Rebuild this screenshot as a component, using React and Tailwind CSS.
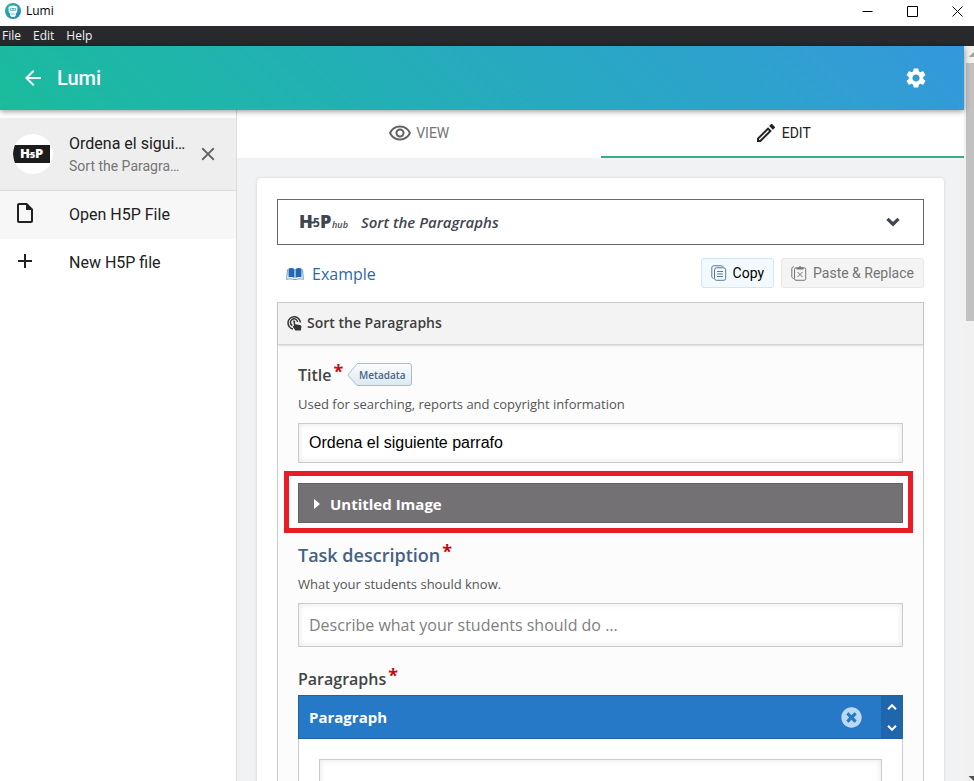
import React, { useState } from "react";
import { MdAdd, MdArrowBack, MdClose, MdOutlineEdit, MdOutlineInsertDriveFile, MdOutlineRemoveRedEye, MdSettings } from "react-icons/md";
import { FaTimesCircle } from "react-icons/fa";

const menuItems = ["File", "Edit", "Help"];

function LumiLogo() {
  return (
    <svg viewBox="0 0 16 16" className="h-4 w-4" aria-hidden="true">
      <defs>
        <linearGradient id="lumi" x1="0" y1="0" x2="1" y2="1">
          <stop offset="0" stopColor="#1abc9c" />
          <stop offset="1" stopColor="#2f7fc4" />
        </linearGradient>
      </defs>
      <circle cx="8" cy="8" r="8" fill="url(#lumi)" />
      <path d="M3.600 3.800Q8 1.200 12.400 3.800V7.500Q12.400 9.600 10.800 10.400V12.400L9.500 14h-3L5.200 12.400V10.400Q3.600 9.600 3.600 7.500z" fill="#fff" />
      <rect x="4.800" y="5" width="6.400" height="2.800" rx="1.200" fill="#4bb3b8" />
      <circle cx="6.600" cy="6.400" r=".8" fill="#fff" />
      <circle cx="9.400" cy="6.400" r=".8" fill="#fff" />
      <path d="M6.200 11h3.600" stroke="#4bb3b8" strokeWidth=".8" />
    </svg>
  );
}

function H5PAvatar() {
  return (
    <svg viewBox="0 0 40 40" className="h-10 w-10 shrink-0 rounded-full bg-white" aria-label="H5P">
      <path d="M1 11H37V29H1Q-1 20 1 11z" fill="#1c1c1c" />
      <g fill="#fff" fontFamily="Open Sans, sans-serif" fontWeight="800">
        <text x="7" y="24" fontSize="13">H</text>
        <text x="17" y="24" fontSize="9">5</text>
        <text x="22" y="24" fontSize="13">P</text>
      </g>
      <path d="M16 20.500h3" stroke="#fff" strokeWidth="1.200" />
    </svg>
  );
}

function HubLogo() {
  return (
    <svg viewBox="0 0 50 28" className="h-7 w-[50px] shrink-0" aria-label="H5P hub">
      <g fill="#3f4650" fontFamily="Open Sans, sans-serif">
        <text x="-1" y="20" fontSize="18" fontWeight="800">H</text>
        <text x="13" y="19" fontSize="12" fontWeight="700">5</text>
        <text x="20" y="20" fontSize="18" fontWeight="800">P</text>
        <text x="32" y="20" fontSize="9" fontWeight="600" fontStyle="italic">hub</text>
      </g>
      <path d="M10 14.500h5" stroke="#3f4650" strokeWidth="2" />
    </svg>
  );
}

function BookIcon() {
  return (
    <svg viewBox="0 0 18 14" className="h-[14px] w-[18px]" aria-hidden="true">
      <path d="M2.500 1.500C4.500.6 7 .8 8.500 2v9C7 10 4.500 9.800 2.500 10.600zM15.500 1.500C13.500.6 11 .8 9.500 2v9c1.500-1 4-1.200 6-.4z" fill="#2267b0" />
      <path d="M1.500 2.500L.6 12.300c2.700-.6 5.400-.5 7.400.2h2c2-.7 4.700-.8 7.400-.2L16.500 2.500" fill="none" stroke="#6d9ccb" />
    </svg>
  );
}

// Concentric rings with a hand pointing at the centre
function TouchIcon() {
  return (
    <svg viewBox="0 0 16 16" className="h-4 w-4" aria-hidden="true" fill="none" stroke="#333" strokeWidth="1.500">
      <path d="M6 14A6.200 6.200 0 1 1 13.400 7.500" />
      <path d="M5.300 10.600A3.600 3.600 0 1 1 10.600 6.800" />
      <path d="M6.200 5.800c.8-.7 1.900-.1 1.900.8v2.600l4.600.8c1.300.3 1.900.9 1.700 2L13.800 15.600H8.400L5.600 11.600c.3-.8 1-.8 1.500-.4z" fill="#333" stroke="none" />
    </svg>
  );
}

function CopyIcon() {
  return (
    <svg viewBox="0 0 16 16" className="h-4 w-4" aria-hidden="true" fill="none" stroke="#5b7a99">
      <path d="M2.500 13.500C1.200 13 .8 12.500.8 11V3C.8 1.500 1.500.8 3 .8h7.500c1 0 1.500.4 1.800 1.200" />
      <rect x="3.500" y="2.800" width="11.200" height="12.500" rx="2" />
      <path d="M6 6.500h6M6 9h6M6 11.500h6" />
    </svg>
  );
}

function PasteIcon() {
  return (
    <svg viewBox="0 0 16 16" className="h-4 w-4" aria-hidden="true" fill="none" stroke="#777">
      <path d="M2.500 13.500C1.200 13 .8 12.500.8 11V4C.8 2.500 1.500 1.800 3 1.800" />
      <rect x="3.500" y="2.800" width="11.200" height="12.500" rx="1.500" />
      <path d="M5.500 4.500V2.500h2L9 .8l1.500 1.700h2v2z" fill="#777" stroke="none" />
      <path d="M6.500 7l5 5M11.500 7l-5 5" />
    </svg>
  );
}

function Required() {
  return <span className="mb-2 ml-[2px] text-lg leading-4 font-bold text-[#c9090f]">*</span>;
}

function TitleBar() {
  return (
    <div className="flex h-[26px] shrink-0 items-center justify-between bg-white pl-[5px] text-black">
      <div className="mb-1 flex items-center gap-[5px] text-xs">
        <LumiLogo />
        <span>Lumi</span>
      </div>
      <div className="mb-1 flex items-center">
        <button aria-label="Minimize" className="flex h-5 w-[45px] items-center justify-center">
          <svg viewBox="0 0 11 11" className="h-[11px] w-[11px]" stroke="#000"><path d="M.5 5.500h10" /></svg>
        </button>
        <button aria-label="Maximize" className="flex h-5 w-[45px] items-center justify-center">
          <svg viewBox="0 0 11 11" className="h-[11px] w-[11px]" fill="none" stroke="#000"><path d="M.5.5h10v10H.5z" /></svg>
        </button>
        <button aria-label="Close" className="flex h-5 w-[39px] items-center justify-end pr-[11px]">
          <svg viewBox="0 0 11 11" className="h-[11px] w-[11px]" stroke="#000"><path d="M.5.5l10 10M10.500.5l-10 10" /></svg>
        </button>
      </div>
    </div>
  );
}

function Sidebar() {
  return (
    <aside className="w-[237px] shrink-0 border-r border-[#dcdcdc] bg-white pt-2 font-[Roboto,sans-serif] text-[#212121]">
      <div className="flex h-[73px] items-center border-b border-[#dddddd] bg-[#eeeeee] pr-[17px] pb-px pl-[13px]">
        <H5PAvatar />
        <div className="ml-4 min-w-0 flex-1">
          <p className="truncate text-base leading-6">Ordena el siguiente parrafo</p>
          <p className="truncate pr-1 text-sm leading-5 text-[#757575]">Sort the Paragraphs</p>
        </div>
        <button aria-label="Close file" className="ml-2 text-[#616161]">
          <MdClose className="h-[22px] w-[22px]" />
        </button>
      </div>
      <button className="flex h-12 w-full items-center bg-[#f7f7f7] pl-[13px] text-left">
        <MdOutlineInsertDriveFile className="mb-1 h-6 w-6" />
        <span className="ml-8">Open H5P File</span>
      </button>
      <button className="flex h-12 w-full items-center pl-[13px] text-left">
        <MdAdd className="mb-1 h-6 w-6" />
        <span className="ml-8">New H5P file</span>
      </button>
    </aside>
  );
}

function EditorPanel() {
  const [title, setTitle] = useState("Ordena el siguiente parrafo");

  return (
    <section className="mt-[14px] border border-[#cccccc] bg-[#fcfcfc]">
      <h2 className="flex h-[42px] items-center gap-1 border-b border-[#d4d4d4] bg-[#f3f3f3] pb-[2px] pl-[9px] text-sm font-semibold text-[#3d3d3d] shadow-sm">
        <TouchIcon />
        Sort the Paragraphs
      </h2>

      <div className="px-5 pt-[18px]">
        {/* Title */}
        <div className="flex h-6 items-center">
          <label htmlFor="title" className="text-base font-semibold text-[#444]">Title</label>
          <Required />
          <button className="relative ml-1 h-6 w-[65px] pl-[5px] text-[10px] font-semibold text-[#4b6584]">
            <svg viewBox="0 0 65 24" className="absolute inset-0 h-6 w-[65px]" aria-hidden="true">
              <defs>
                <linearGradient id="tag" x1="0" y1="0" x2="0" y2="1">
                  <stop offset="0" stopColor="#fbfdfe" />
                  <stop offset="1" stopColor="#dce8f1" />
                </linearGradient>
              </defs>
              <path d="M.8 12L9.500 1.500Q10 .5 11 .5H62Q64.500.5 64.500 3V20Q64.500 22.500 62 22.500H11Q10 22.500 9.500 22z" fill="url(#tag)" stroke="#a9bccd" />
            </svg>
            <span className="relative">Metadata</span>
          </button>
        </div>
        <p className="mt-2 text-[13px] leading-[18px] text-[#555]">Used for searching, reports and copyright information</p>
        <input
          id="title"
          value={title}
          onChange={(e) => setTitle(e.target.value)}
          className="mt-[10px] block h-10 w-full border border-[#cccccc] bg-white px-[10px] font-['Liberation_Sans',sans-serif] text-base text-black shadow-[inset_0_0_6px_#e5e5e5]"
        />

        {/* Image */}
        <div className="relative mt-5">
          <button className="flex h-10 w-full items-center border border-[#626063] bg-[#747174] pt-[2px] pl-[15px] text-[15px] font-bold text-white">
            <svg viewBox="0 0 7 10" className="h-[10px] w-[7px]" aria-hidden="true"><path d="M0 0l6 5-6 5z" fill="#fff" /></svg>
            <span className="ml-[9px]">Untitled Image</span>
          </button>
          <div className="pointer-events-none absolute -top-3 -right-[10px] -bottom-[10px] -left-[14px] border-[5px] border-[#e81c24]"></div>
        </div>

        {/* Task description */}
        <div className="mt-5 flex h-6 items-center">
          <label htmlFor="task" className="text-lg font-semibold text-[#456285]">Task description</label>
          <Required />
        </div>
        <p className="mt-2 text-[13px] leading-[18px] text-[#555]">What your students should know.</p>
        <input
          id="task"
          placeholder="Describe what your students should do ..."
          className="mt-[10px] block h-11 w-full border border-[#cccccc] bg-white px-[10px] text-base text-[#333] shadow-[inset_0_0_6px_#e5e5e5] placeholder:text-[#808080]"
        />

        {/* Paragraphs */}
        <div className="mt-5 flex h-6 items-center">
          <label htmlFor="paragraph" className="text-base font-semibold text-[#444]">Paragraphs</label>
          <Required />
        </div>
        <div className="mt-1 border-x border-[#cccccc] bg-white">
          <div className="-mx-px flex h-11 items-stretch border border-[#1f62a5] bg-[#2579c6] text-white">
            <h3 className="flex flex-1 items-center pl-[10px] text-[15px] font-bold">Paragraph</h3>
            <button aria-label="Remove paragraph" className="mr-[19px] text-[#bcd8f2]">
              <FaTimesCircle className="h-[21px] w-[21px]" />
            </button>
            <div className="flex w-[21px] flex-col items-center bg-[#1f66ac]">
              <button aria-label="Move up" className="flex flex-1 items-center">
                <svg viewBox="0 0 10 6" className="h-[6px] w-[10px]" fill="none" stroke="#fff" strokeWidth="2"><path d="M1 5.200l4-4 4 4" /></svg>
              </button>
              <button aria-label="Move down" className="flex flex-1 items-center">
                <svg viewBox="0 0 10 6" className="h-[6px] w-[10px]" fill="none" stroke="#fff" strokeWidth="2"><path d="M1 .8l4 4 4-4" /></svg>
              </button>
            </div>
          </div>
          <div className="p-5">
            <textarea id="paragraph" className="block h-24 w-full resize-none border border-[#cccccc] bg-white p-2 shadow-[inset_0_0_6px_#e5e5e5]"></textarea>
          </div>
        </div>
      </div>
    </section>
  );
}

export default function App() {
  return (
    <div className="flex h-screen flex-col overflow-hidden bg-white font-['Open_Sans',sans-serif]">
      <TitleBar />

      <nav className="flex h-5 shrink-0 items-center gap-3 bg-[#28292d] pl-[2px] text-xs text-[#f2f2f2]">
        {menuItems.map((item) => (
          <button key={item}>{item}</button>
        ))}
      </nav>

      <div className="flex min-h-0 flex-1">
        <div className="flex min-w-0 flex-1 flex-col">
          <header className="z-10 flex h-16 shrink-0 items-center bg-linear-45 from-[#1abc9c] to-[#3498db] pr-9 pl-[21px] font-[Roboto,sans-serif] text-white shadow-[0_1px_6px_rgba(0,0,0,0.45)]">
            <button aria-label="Back"><MdArrowBack className="h-6 w-6" /></button>
            <h1 className="ml-3 flex-1 text-xl font-medium">Lumi</h1>
            <button aria-label="Settings"><MdSettings className="h-6 w-6" /></button>
          </header>

          <div className="flex min-h-0 flex-1">
            <Sidebar />

            <main className="min-w-0 flex-1 overflow-hidden bg-[#f0f2f4]">
              <div role="tablist" className="flex h-12 bg-white font-[Roboto,sans-serif] text-sm">
                <button role="tab" aria-selected="false" className="flex flex-1 items-center justify-center gap-1 pb-[2px] text-[#757575]">
                  <MdOutlineRemoveRedEye className="h-6 w-6 text-[#616161]" />
                  VIEW
                </button>
                <button role="tab" aria-selected="true" className="flex flex-1 items-center justify-center gap-1 border-b-2 border-[#3aab93] text-[#212121]">
                  <MdOutlineEdit className="h-6 w-6" />
                  EDIT
                </button>
              </div>

              <div className="m-5 rounded bg-white px-5 pt-[21px] pb-5 shadow-[0_0_3px_rgba(0,0,0,0.15)]">
                <div className="relative flex h-[46px] items-center border border-[#666a70] pl-[22px] text-[#3f4650]">
                  <HubLogo />
                  <select aria-label="Content type" className="ml-[11px] h-full flex-1 appearance-none bg-transparent text-[15px] font-semibold italic">
                    <option>Sort the Paragraphs</option>
                  </select>
                  <svg viewBox="0 0 14 10" className="pointer-events-none absolute right-[23px] h-[10px] w-[14px]" fill="none" stroke="#3f4650" strokeWidth="3.200" aria-hidden="true">
                    <path d="M1.500 1.800L7 7.200l5.500-5.400" />
                  </svg>
                </div>

                <div className="mt-[13px] flex items-center justify-between">
                  <a href="#example" className="ml-[9px] flex items-center gap-2 pt-[2px] text-base text-[#2f68a8]">
                    <BookIcon />
                    Example
                  </a>
                  <div className="flex gap-[7px] font-[Roboto,sans-serif] text-sm">
                    <button className="flex h-[30px] items-center gap-[6px] rounded-[3px] border border-[#d3e6f2] bg-[#f2faff] px-[9px] text-black">
                      <CopyIcon />
                      Copy
                    </button>
                    <button className="flex h-[30px] items-center gap-[6px] rounded-[3px] border border-[#e6e6e6] bg-[#f4f4f4] px-[9px] text-[#757575]">
                      <PasteIcon />
                      Paste &amp; Replace
                    </button>
                  </div>
                </div>

                <EditorPanel />
              </div>
            </main>
          </div>
        </div>

        {/* Window scrollbar */}
        <div className="flex w-[10px] shrink-0 flex-col items-end justify-between overflow-hidden bg-[#f1f1f1]">
          <div className="flex w-2 flex-1 flex-col">
            <svg viewBox="0 0 8 17" className="h-[17px] w-2 shrink-0" aria-hidden="true"><path d="M2.500 11L8 6v5z" fill="#a3a3a3" /></svg>
            <div className="h-[258px] w-full bg-[#c1c1c1]"></div>
          </div>
          <svg viewBox="0 0 8 10" className="h-[10px] w-2 shrink-0" aria-hidden="true"><path d="M2.500 5L8 10V5z" fill="#505050" /></svg>
        </div>
      </div>
    </div>
  );
}
